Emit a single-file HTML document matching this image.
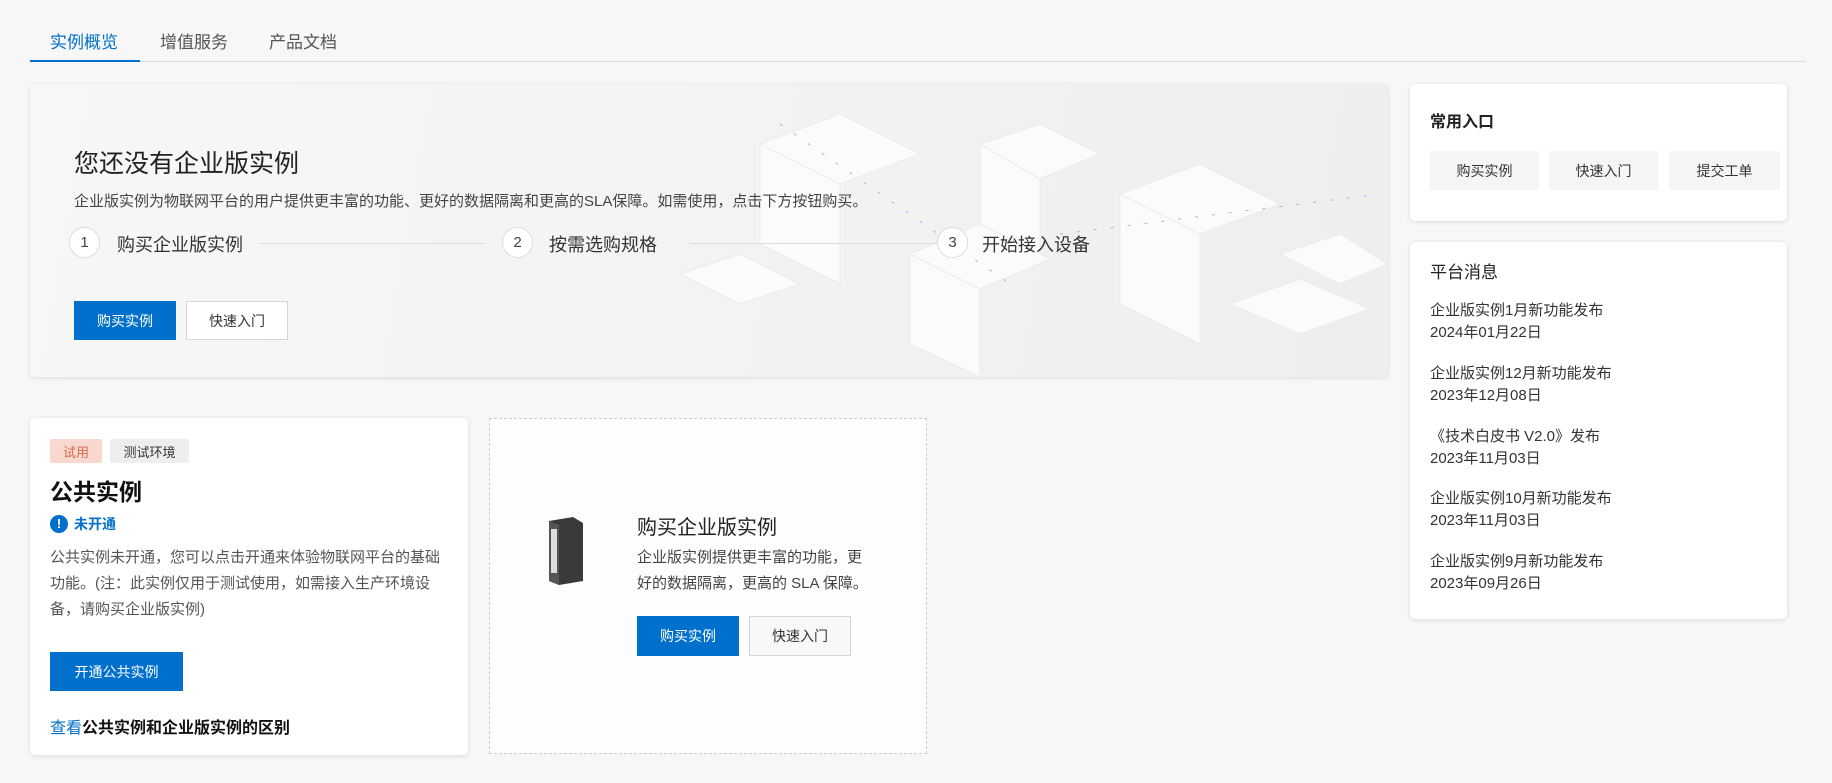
<!DOCTYPE html>
<html><head><meta charset="utf-8"><style>
*{box-sizing:border-box;margin:0;padding:0}
body{width:1832px;height:783px;background:#f7f7f7;font-family:"Liberation Sans","Noto Sans CJK SC",sans-serif;color:#333;position:relative;overflow:hidden}
.a{position:absolute}
.card{position:absolute;background:#fff;border-radius:5px;box-shadow:0 1px 5px rgba(0,0,0,.12)}
.btnp{position:absolute;background:#0070cc;color:#fff;font-size:14px;display:flex;align-items:center;justify-content:center}
.btns{position:absolute;background:#fff;border:1px solid #d6d6d6;color:#333;font-size:14px;display:flex;align-items:center;justify-content:center}
.qb{position:absolute;background:#f4f5f7;font-size:14px;color:#333;display:flex;align-items:center;justify-content:center;top:67px;height:39px;border-radius:2px}
.circ{position:absolute;width:31px;height:31px;border-radius:50%;border:1px solid #ddd;background:#fff;font-size:15px;display:flex;align-items:center;justify-content:center;color:#444}
.st{position:absolute;font-size:18px;color:#333}
.ln{position:absolute;height:1px;background:#ddd}
.msg{position:absolute;left:20px;font-size:15px;line-height:22px;color:#333}
</style></head><body>
<div class="a" style="left:50px;top:28px;font-size:17px;color:#0070cc">实例概览</div>
<div class="a" style="left:160px;top:28px;font-size:17px;color:#555">增值服务</div>
<div class="a" style="left:269px;top:28px;font-size:17px;color:#555">产品文档</div>
<div class="a" style="left:30px;top:61px;width:1776px;height:1px;background:#ddd"></div>
<div class="a" style="left:30px;top:60px;width:110px;height:2px;background:#0070cc"></div>

<div class="card" style="left:30px;top:84px;width:1358px;height:293px;background:linear-gradient(100deg,#f7f7f7 0%,#f3f3f3 50%,#eeeeee 100%);overflow:hidden">
  <svg class="a" style="left:650px;top:0" width="708" height="293">
    <g fill="#fbfbfb" stroke="#ebebeb">
      <polygon points="80,60 160,30 240,70 160,100"/><polygon points="80,60 160,100 160,200 80,160"/>
      <polygon points="300,60 360,40 420,70 360,95"/><polygon points="300,60 360,95 360,180 300,150"/>
      <polygon points="440,110 520,80 600,120 520,150"/><polygon points="440,110 520,150 520,260 440,220"/>
      <polygon points="230,170 300,140 370,175 300,205"/><polygon points="230,170 300,205 300,293 230,260"/>
      <polygon points="600,170 660,150 708,180 660,200"/><polygon points="550,220 620,195 690,225 620,250"/>
      <polygon points="0,190 60,170 120,200 60,220"/>
    </g>
    <g stroke="#a8b4e6" stroke-dasharray="3 14"><line x1="100" y1="40" x2="330" y2="200"/><line x1="380" y1="150" x2="700" y2="110"/></g>
  </svg>
  <div class="a" style="left:44px;top:60px;font-size:25px;color:#222">您还没有企业版实例</div>
  <div class="a" style="left:44px;top:106px;font-size:15px;color:#444;white-space:nowrap">企业版实例为物联网平台的用户提供更丰富的功能、更好的数据隔离和更高的SLA保障。如需使用，点击下方按钮购买。</div>
  <div class="circ" style="left:39px;top:143px">1</div><div class="st" style="left:87px;top:147px">购买企业版实例</div>
  <div class="ln" style="left:229px;top:159px;width:226px"></div>
  <div class="circ" style="left:472px;top:143px">2</div><div class="st" style="left:519px;top:147px">按需选购规格</div>
  <div class="ln" style="left:660px;top:159px;width:250px"></div>
  <div class="circ" style="left:907px;top:143px">3</div><div class="st" style="left:952px;top:147px">开始接入设备</div>
  <div class="btnp" style="left:44px;top:217px;width:102px;height:39px">购买实例</div>
  <div class="btns" style="left:156px;top:217px;width:102px;height:39px">快速入门</div>
</div>

<div class="card" style="left:1410px;top:84px;width:377px;height:137px">
  <div class="a" style="left:20px;top:24px;font-size:16px;font-weight:bold;color:#222">常用入口</div>
  <div class="qb" style="left:20px;width:109px">购买实例</div>
  <div class="qb" style="left:139px;width:109px">快速入门</div>
  <div class="qb" style="left:259px;width:111px">提交工单</div>
</div>

<div class="card" style="left:1410px;top:242px;width:377px;height:377px">
  <div class="a" style="left:20px;top:16px;font-size:17px;color:#222">平台消息</div>
  <div class="msg" style="top:58px">企业版实例1月新功能发布<br>2024年01月22日</div>
  <div class="msg" style="top:121px">企业版实例12月新功能发布<br>2023年12月08日</div>
  <div class="msg" style="top:184px">《技术白皮书 V2.0》发布<br>2023年11月03日</div>
  <div class="msg" style="top:246px">企业版实例10月新功能发布<br>2023年11月03日</div>
  <div class="msg" style="top:309px">企业版实例9月新功能发布<br>2023年09月26日</div>
</div>

<div class="card" style="left:30px;top:418px;width:438px;height:337px">
  <div class="a" style="left:20px;top:21px;width:52px;height:24px;background:#f9d9cf;color:#d2694c;font-size:13px;display:flex;align-items:center;justify-content:center;border-radius:2px">试用</div>
  <div class="a" style="left:80px;top:21px;width:79px;height:24px;background:#eee;color:#333;font-size:13px;display:flex;align-items:center;justify-content:center;border-radius:2px">测试环境</div>
  <div class="a" style="left:20px;top:55px;font-size:23px;font-weight:bold;color:#111">公共实例</div>
  <div class="a" style="left:20px;top:97px;width:18px;height:18px;border-radius:50%;background:#0070cc;color:#fff;font-size:13px;font-weight:bold;text-align:center;line-height:18px">!</div>
  <div class="a" style="left:44px;top:96px;font-size:14px;color:#0070cc;font-weight:bold">未开通</div>
  <div class="a" style="left:20px;top:127px;width:400px;font-size:15px;line-height:26px;color:#555">公共实例未开通，您可以点击开通来体验物联网平台的基础功能。(注：此实例仅用于测试使用，如需接入生产环境设备，请购买企业版实例)</div>
  <div class="btnp" style="left:20px;top:234px;width:133px;height:39px">开通公共实例</div>
  <div class="a" style="left:20px;top:296px;font-size:16px;font-weight:bold;color:#111"><span style="color:#0070cc;font-weight:normal">查看</span>公共实例和企业版实例的区别</div>
</div>

<div class="a" style="left:489px;top:418px;width:438px;height:336px;border:1px dashed #ccc;background:#fdfdfd">
  <svg class="a" style="left:53px;top:96px" width="44" height="72"><polygon points="6,6 30,2 40,8 40,66 16,70 6,66" fill="#3a3a3a"/><polygon points="6,6 16,10 16,70 6,66" fill="#555"/><rect x="8" y="14" width="6" height="44" fill="#ddd"/></svg>
  <div class="a" style="left:147px;top:92px;font-size:20px;color:#222">购买企业版实例</div>
  <div class="a" style="left:147px;top:126px;white-space:nowrap;font-size:15px;line-height:26px;color:#444">企业版实例提供更丰富的功能，更<br>好的数据隔离，更高的 SLA 保障。</div>
  <div class="btnp" style="left:147px;top:197px;width:102px;height:40px">购买实例</div>
  <div class="btns" style="left:259px;top:197px;width:102px;height:40px;background:#f8f8f8">快速入门</div>
</div>
</body></html>
